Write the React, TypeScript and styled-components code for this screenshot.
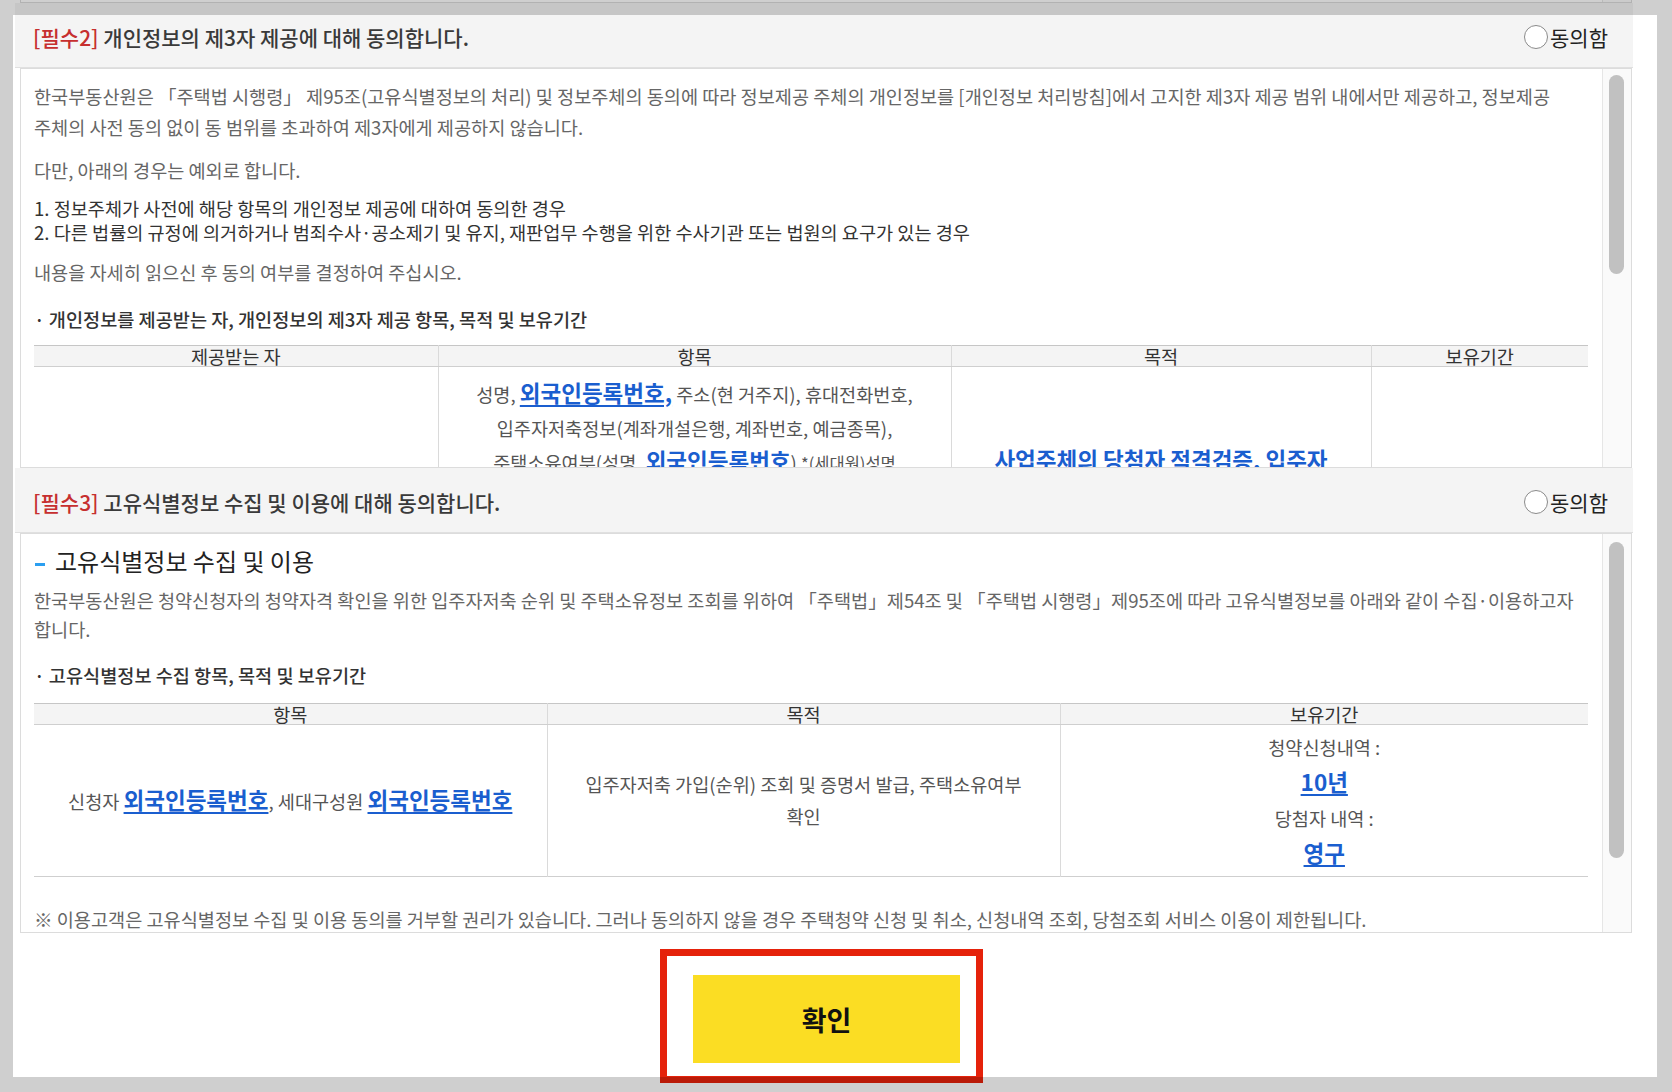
import React from "react";
import styled, { createGlobalStyle } from "styled-components";

const GlobalStyle = createGlobalStyle`
  html, body {
    margin: 0;
    padding: 0;
    background: #fff;
    overflow: hidden;
  }
  body {
    font-family: "Noto Sans CJK KR", "Noto Sans", sans-serif;
    color: #333;
  }
  * {
    box-sizing: border-box;
  }
`;

const Page = styled.div`
  position: relative;
  width: 1672px;
  height: 1092px;
  overflow: hidden;
  background: #fff;
  padding: 0 39px 0 15px;
`;

const PrevTail = styled.div`
  display: flex;
  justify-content: flex-end;
  height: 3px;
  margin: 0 1px 0 5px;
  border: 1px solid #dcdcdc;
  border-top: none;
`;

const PrevTrack = styled.div`
  width: 29px;
  border-left: 1px solid #e6e6e6;
  background: #fafafa;
`;

const AgreeHeader = styled.div`
  display: flex;
  align-items: center;
  justify-content: space-between;
  height: 65px;
  padding: 4px 25px 0 18px;
  background: #f4f4f4;
  border-bottom: 1px solid #e0e0e0;
`;

const HeaderTitle = styled.div`
  font-size: 21px;
  font-weight: 500;
  color: #3a3a3a;
  white-space: nowrap;
`;

const Required = styled.span`
  color: #c62f2f;
`;

const AgreeLabel = styled.label`
  display: flex;
  align-items: center;
  gap: 2px;
  font-size: 21px;
  color: #222;
`;

const RadioCircle = styled.span`
  width: 24px;
  height: 24px;
  border-radius: 50%;
  border: 1px solid #8a8a8a;
  background: #fff;
`;

const ScrollBox = styled.div`
  display: flex;
  height: 400px;
  margin: 0 1px 0 5px;
  border: 1px solid #dcdcdc;
  background: #fff;
  overflow: hidden;
`;

const ScrollContent = styled.div<{ $pt: number }>`
  flex: 1;
  min-width: 0;
  overflow: hidden;
  padding: ${(p) => p.$pt}px 14px 0 13px;
  font-size: 18.6px;
  color: #666;
`;

const Track = styled.div`
  flex: none;
  width: 29px;
  border-left: 1px solid #e6e6e6;
  background: #fafafa;
  padding-left: 6px;
`;

const Thumb = styled.div<{ $top: number; $height: number }>`
  width: 15px;
  margin-top: ${(p) => p.$top}px;
  height: ${(p) => p.$height}px;
  border-radius: 8px;
  background: #c1c1c1;
`;

const Para = styled.p<{ $mb: number; $mt?: number; $lh?: number; $dark?: boolean }>`
  margin: ${(p) => p.$mt ?? 0}px 0 ${(p) => p.$mb}px;
  line-height: ${(p) => p.$lh ?? 31}px;
  color: ${(p) => (p.$dark ? "#333" : "#666")};
  white-space: nowrap;
`;

const BulletHead = styled.p<{ $mb: number }>`
  margin: 0 0 ${(p) => p.$mb}px;
  line-height: 31px;
  color: #333;
  font-weight: 500;
  white-space: nowrap;
`;

const SectionTitle = styled.h3`
  display: flex;
  align-items: center;
  gap: 10px;
  margin: 0 0 10px 1px;
  height: 30px;
  font-size: 24px;
  font-weight: 400;
  color: #222;
  &::before {
    content: "";
    width: 10px;
    height: 3px;
    margin-top: 8px;
    background: #2b9ff0;
  }
`;

const InfoTable = styled.table`
  width: 100%;
  border-collapse: collapse;
  table-layout: fixed;
  border-top: 1px solid #c6c6c6;
  font-size: 18.6px;
`;

const Th = styled.th<{ $w?: number }>`
  width: ${(p) => (p.$w ? `${p.$w}px` : "auto")};
  height: 21px;
  padding: 0;
  line-height: 20px;
  font-weight: 400;
  color: #333;
  background: #f4f4f4;
  border-bottom: 1px solid #cfcfcf;
  & + & {
    border-left: 1px solid #dadada;
  }
`;

const Tr = styled.tr<{ $h: number }>`
  height: ${(p) => p.$h}px;
  border-bottom: 1px solid #cfcfcf;
`;

const Td = styled.td<{ $pt?: number; $lh?: number; $top?: boolean }>`
  padding: ${(p) => p.$pt ?? 0}px 6px 0;
  vertical-align: ${(p) => (p.$top ? "top" : "middle")};
  text-align: center;
  line-height: ${(p) => p.$lh ?? 32}px;
  color: #555;
  white-space: nowrap;
  & + & {
    border-left: 1px solid #dadada;
  }
`;

const Link = styled.a`
  font-size: 22.5px;
  font-weight: 700;
  color: #1a5ecf;
  text-decoration: underline;
  text-underline-offset: 3px;
`;

const Small = styled.span`
  font-size: 16.5px;
`;

const Footer = styled.div`
  display: flex;
  justify-content: center;
  padding-top: 16px;
`;

const Highlight = styled.div`
  margin-right: 5px;
  border: 7px solid #e5220b;
  padding: 19px 16px 13px 26px;
`;

const ConfirmButton = styled.button`
  width: 267px;
  height: 88px;
  border: none;
  background: #fbdd23;
  font-family: inherit;
  font-size: 27px;
  font-weight: 700;
  color: #111;
`;

const Dim = styled.div`
  position: absolute;
  left: 13px;
  top: 15px;
  width: 1644px;
  height: 1062px;
  pointer-events: none;
  box-shadow: 0 0 0 3000px rgba(0, 0, 0, 0.19);
`;

const Agree: React.FC<{ no: number; title: string }> = ({ no, title }) => (
  <AgreeHeader>
    <HeaderTitle>
      <Required>[필수{no}]</Required> {title}
    </HeaderTitle>
    <AgreeLabel>
      <RadioCircle />
      동의함
    </AgreeLabel>
  </AgreeHeader>
);

export default function App() {
  return (
    <Page>
      <GlobalStyle />
      <PrevTail>
        <PrevTrack />
      </PrevTail>

      <Agree no={2} title="개인정보의 제3자 제공에 대해 동의합니다." />
      <ScrollBox>
        <ScrollContent $pt={11}>
          <Para $mb={12}>
            한국부동산원은 「주택법 시행령」 제95조(고유식별정보의 처리) 및 정보주체의 동의에 따라 정보제공 주체의
            개인정보를 [개인정보 처리방침]에서 고지한 제3자 제공 범위 내에서만 제공하고, 정보제공
            <br />
            주체의 사전 동의 없이 동 범위를 초과하여 제3자에게 제공하지 않습니다.
          </Para>
          <Para $mb={11}>다만, 아래의 경우는 예외로 합니다.</Para>
          <Para $mb={13} $lh={23.5} $dark>
            1. 정보주체가 사전에 해당 항목의 개인정보 제공에 대하여 동의한 경우
            <br />
            2. 다른 법률의 규정에 의거하거나 범죄수사·공소제기 및 유지, 재판업무 수행을 위한 수사기관 또는 법원의 요구가
            있는 경우
          </Para>
          <Para $mb={16}>내용을 자세히 읽으신 후 동의 여부를 결정하여 주십시오.</Para>
          <BulletHead $mb={11}>· 개인정보를 제공받는 자, 개인정보의 제3자 제공 항목, 목적 및 보유기간</BulletHead>
          <InfoTable>
            <thead>
              <tr>
                <Th $w={404}>제공받는 자</Th>
                <Th $w={513}>항목</Th>
                <Th $w={420}>목적</Th>
                <Th>보유기간</Th>
              </tr>
            </thead>
            <tbody>
              <Tr $h={300}>
                <Td $top />
                <Td $top $pt={9} $lh={33.5}>
                  성명, <Link>외국인등록번호,</Link> 주소(현 거주지), 휴대전화번호,
                  <br />
                  입주자저축정보(계좌개설은행, 계좌번호, 예금종목),
                  <br />
                  주택소유여부(성명, <Link>외국인등록번호</Link>) <Small>*(세대원)성명</Small>
                  <br />
                  <Link>외국인등록번호</Link>, 당첨사실
                </Td>
                <Td $top $pt={75} $lh={34}>
                  <Link>사업주체의 당첨자 적격검증, 입주자</Link>
                  <br />
                  <Link>관리 및 주택공급 업무</Link>
                </Td>
                <Td $top />
              </Tr>
            </tbody>
          </InfoTable>
        </ScrollContent>
        <Track>
          <Thumb $top={6} $height={199} />
        </Track>
      </ScrollBox>

      <Agree no={3} title="고유식별정보 수집 및 이용에 대해 동의합니다." />
      <ScrollBox>
        <ScrollContent $pt={11}>
          <SectionTitle>고유식별정보 수집 및 이용</SectionTitle>
          <Para $mb={16} $lh={29}>
            한국부동산원은 청약신청자의 청약자격 확인을 위한 입주자저축 순위 및 주택소유정보 조회를 위하여 「주택법」제54조
            및 「주택법 시행령」제95조에 따라 고유식별정보를 아래와 같이 수집·이용하고자
            <br />
            합니다.
          </Para>
          <BulletHead $mb={12.5}>· 고유식별정보 수집 항목, 목적 및 보유기간</BulletHead>
          <InfoTable>
            <thead>
              <tr>
                <Th $w={513}>항목</Th>
                <Th $w={513}>목적</Th>
                <Th>보유기간</Th>
              </tr>
            </thead>
            <tbody>
              <Tr $h={152}>
                <Td>
                  신청자 <Link>외국인등록번호</Link>, 세대구성원 <Link>외국인등록번호</Link>
                </Td>
                <Td>
                  입주자저축 가입(순위) 조회 및 증명서 발급, 주택소유여부
                  <br />
                  확인
                </Td>
                <Td $lh={35}>
                  청약신청내역 :
                  <br />
                  <Link>10년</Link>
                  <br />
                  당첨자 내역 :
                  <br />
                  <Link>영구</Link>
                </Td>
              </Tr>
            </tbody>
          </InfoTable>
          <Para $mb={0} $mt={26}>
            ※ 이용고객은 고유식별정보 수집 및 이용 동의를 거부할 권리가 있습니다. 그러나 동의하지 않을 경우 주택청약 신청 및
            취소, 신청내역 조회, 당첨조회 서비스 이용이 제한됩니다.
          </Para>
        </ScrollContent>
        <Track>
          <Thumb $top={8} $height={316} />
        </Track>
      </ScrollBox>

      <Footer>
        <Highlight>
          <ConfirmButton>확인</ConfirmButton>
        </Highlight>
      </Footer>

      <Dim />
    </Page>
  );
}
